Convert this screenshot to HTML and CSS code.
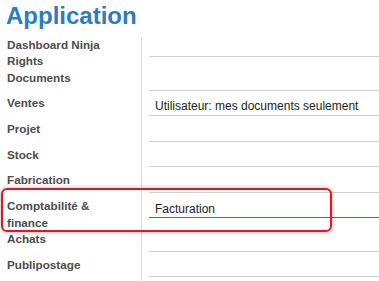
FILE: index.html
```html
<!DOCTYPE html>
<html lang="fr">
<head>
    <meta charset="UTF-8">
    <meta name="viewport" content="width=device-width, initial-scale=1.0">
    <title>Application</title>
    <link rel="stylesheet" href="styles.css">
</head>
<body>
    <div class="page">
        <h1>Application</h1>
        <div class="group">
            <div class="row">
                <div class="label">Dashboard Ninja Rights</div>
                <div class="cell"><div class="field"></div></div>
            </div>
            <div class="row">
                <div class="label">Documents</div>
                <div class="cell"><div class="field"></div></div>
            </div>
            <div class="row">
                <div class="label">Ventes</div>
                <div class="cell"><div class="field">Utilisateur: mes documents seulement</div></div>
            </div>
            <div class="row">
                <div class="label">Projet</div>
                <div class="cell"><div class="field"></div></div>
            </div>
            <div class="row">
                <div class="label">Stock</div>
                <div class="cell"><div class="field"></div></div>
            </div>
            <div class="row">
                <div class="label">Fabrication</div>
                <div class="cell"><div class="field"></div></div>
            </div>
            <div class="row">
                <div class="label">Comptabilité &amp; finance</div>
                <div class="cell"><div class="field focused">Facturation</div></div>
            </div>
            <div class="row">
                <div class="label">Achats</div>
                <div class="cell"><div class="field"></div></div>
            </div>
            <div class="row">
                <div class="label">Publipostage</div>
                <div class="cell"><div class="field"></div></div>
            </div>
        </div>
        <div class="highlight"></div>
    </div>
</body>
</html>
```

FILE: styles.css
```css
body {
    font-family: "Liberation Sans", Arial, sans-serif;
    background-color: #fff;
    margin: 0;
    overflow: hidden;
}

.page {
    position: relative;
    height: 281px;
}

h1 {
    margin: 0 0 5.5px;
    padding: 1px 0 0 6px;
    height: 30px;
    line-height: 30px;
    font-size: 24px;
    font-weight: bold;
    color: #2f7bc3;
}

.group {
    display: flex;
    flex-direction: column;
}

.row {
    display: grid;
    grid-template-columns: 142px 1fr;
}

.label {
    box-sizing: border-box;
    padding: 0 20px 0 7px;
    border-right: 1px solid #ddd;
    font-size: 11.7px;
    line-height: 16.7px;
    font-weight: bold;
    color: #4c4c4c;
}

.cell {
    padding: 0 0 4.9px 7px;
}

.field {
    height: 16.7px;
    padding: 3px 0 0 6px;
    border-bottom: 1px solid #cfcfcf;
    font-size: 12px;
    line-height: 16.7px;
    color: #222;
}

.field.focused {
    border-bottom-color: #3a6ea5;
}

.highlight {
    position: absolute;
    left: 1px;
    top: 188px;
    width: 327px;
    height: 40px;
    border: 2px solid #e8141b;
    border-radius: 6px;
    box-shadow: 0 0 5px rgba(0, 0, 0, 0.3);
}
```
